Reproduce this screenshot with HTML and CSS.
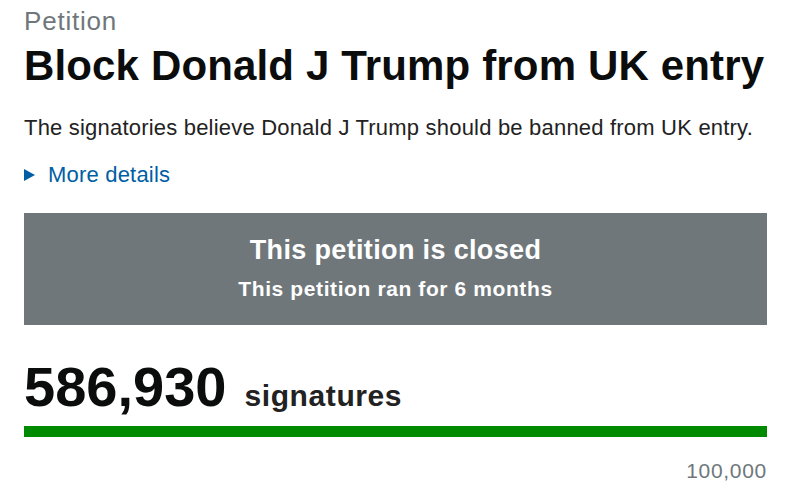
FILE: index.html
```html
<!DOCTYPE html>
<html lang="en">

<head>
    <meta charset="UTF-8">
    <meta name="viewport" content="width=device-width, initial-scale=1.0">
    <title>Block Donald J Trump from UK entry</title>
    <link rel="stylesheet" href="styles.css">
</head>

<body>

    <div class="petition">
        <p class="caption">Petition</p>
        <h1>Block Donald J Trump from UK entry</h1>

        <p class="summary">The signatories believe Donald J Trump should be banned from UK entry.</p>

        <a class="details" href="#">
            <span class="arrow"></span>
            More details
        </a>

        <div class="closed">
            <h2>This petition is closed</h2>
            <p>This petition ran for 6 months</p>
        </div>

        <div class="count">
            <span class="number">586,930</span>
            <span class="label">signatures</span>
        </div>

        <div class="progress">
            <div class="bar" style="width: 100%"></div>
        </div>
        <p class="target">100,000</p>
    </div>

</body>

</html>
```

FILE: styles.css
```css
* {
    margin: 0;
    padding: 0;
    box-sizing: border-box;
}

body {
    font-family: "Liberation Sans", Arial, sans-serif;
    background-color: #fff;
    color: #0b0c0c;
}

.petition {
    width: 743px;
    margin-left: 24px;
    padding-top: 6px;
}

.caption {
    font-size: 26px;
    line-height: 30px;
    letter-spacing: 0.8px;
    color: #6f777b;
}

h1 {
    font-size: 42px;
    line-height: 48px;
    letter-spacing: 0.15px;
    font-weight: bold;
    margin-top: 6px;
}

.summary {
    font-size: 22px;
    line-height: 28px;
    letter-spacing: 0.2px;
    color: #222;
    margin-top: 24px;
}

.details {
    display: flex;
    align-items: center;
    gap: 13px;
    margin-top: 19px;
    font-size: 22px;
    line-height: 28px;
    letter-spacing: 0.2px;
    color: #005ea5;
    text-decoration: none;
}

.arrow {
    width: 0;
    height: 0;
    border-top: 6px solid transparent;
    border-bottom: 6px solid transparent;
    border-left: 11px solid #005ea5;
}

.closed {
    margin-top: 24px;
    height: 112px;
    padding-top: 21px;
    background-color: #6f777b;
    color: #fff;
    text-align: center;
}

.closed h2 {
    font-size: 27px;
    line-height: 32px;
    letter-spacing: 0.35px;
    font-weight: bold;
}

.closed p {
    font-size: 21px;
    line-height: 26px;
    letter-spacing: 0.6px;
    font-weight: bold;
    margin-top: 10px;
}

.count {
    display: flex;
    align-items: baseline;
    gap: 18px;
    margin-top: 30px;
}

.number {
    font-size: 56px;
    line-height: 64px;
    font-weight: bold;
}

.label {
    font-size: 30px;
    letter-spacing: 0.6px;
    font-weight: bold;
    color: #222;
}

.progress {
    margin-top: 7px;
    height: 11px;
    background-color: #dee0e2;
}

.bar {
    height: 100%;
    background-color: #008a00;
}

.target {
    margin-top: 22px;
    font-size: 21px;
    line-height: 24px;
    letter-spacing: 0.7px;
    color: #6f777b;
    text-align: right;
}
```
